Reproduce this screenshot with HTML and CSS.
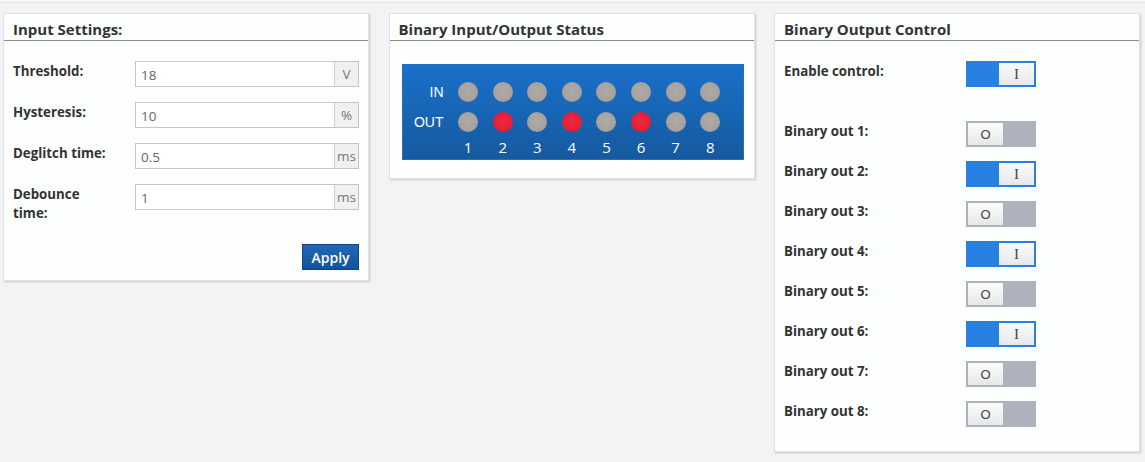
FILE: index.html
```html
<!DOCTYPE html>
<html>
<head>
<meta charset="utf-8">
<link rel="stylesheet" href="styles.css">
</head>
<body>
<div class="topline"></div>
<div class="panels">
  <section class="panel">
    <h2 class="panel-title">Input Settings:</h2>
    <div class="panel-body settings">
      <div class="field">
        <label class="field-label">Threshold:</label>
        <div class="input-group"><span class="input-value">18</span><span class="addon">V</span></div>
      </div>
      <div class="field">
        <label class="field-label">Hysteresis:</label>
        <div class="input-group"><span class="input-value">10</span><span class="addon">%</span></div>
      </div>
      <div class="field">
        <label class="field-label">Deglitch time:</label>
        <div class="input-group"><span class="input-value">0.5</span><span class="addon">ms</span></div>
      </div>
      <div class="field">
        <label class="field-label">Debounce time:</label>
        <div class="input-group"><span class="input-value">1</span><span class="addon">ms</span></div>
      </div>
      <div class="actions"><button class="btn-apply">Apply</button></div>
    </div>
  </section>

  <section class="panel">
    <h2 class="panel-title">Binary Input/Output Status</h2>
    <div class="panel-body status">
      <div class="led-box">
        <div class="led-row"><span class="led-label">IN</span>
          <span class="led"></span><span class="led"></span><span class="led"></span><span class="led"></span><span class="led"></span><span class="led"></span><span class="led"></span><span class="led"></span>
        </div>
        <div class="led-row"><span class="led-label">OUT</span>
          <span class="led"></span><span class="led on"></span><span class="led"></span><span class="led on"></span><span class="led"></span><span class="led on"></span><span class="led"></span><span class="led"></span>
        </div>
        <div class="led-row nums"><span class="led-label"></span>
          <span class="num">1</span><span class="num">2</span><span class="num">3</span><span class="num">4</span><span class="num">5</span><span class="num">6</span><span class="num">7</span><span class="num">8</span>
        </div>
      </div>
    </div>
  </section>

  <section class="panel">
    <h2 class="panel-title">Binary Output Control</h2>
    <div class="panel-body control">
      <div class="ctl-row enable"><span class="ctl-label">Enable control:</span><span class="toggle on"><span class="knob">I</span></span></div>
      <div class="ctl-row"><span class="ctl-label">Binary out 1:</span><span class="toggle"><span class="knob">O</span></span></div>
      <div class="ctl-row"><span class="ctl-label">Binary out 2:</span><span class="toggle on"><span class="knob">I</span></span></div>
      <div class="ctl-row"><span class="ctl-label">Binary out 3:</span><span class="toggle"><span class="knob">O</span></span></div>
      <div class="ctl-row"><span class="ctl-label">Binary out 4:</span><span class="toggle on"><span class="knob">I</span></span></div>
      <div class="ctl-row"><span class="ctl-label">Binary out 5:</span><span class="toggle"><span class="knob">O</span></span></div>
      <div class="ctl-row"><span class="ctl-label">Binary out 6:</span><span class="toggle on"><span class="knob">I</span></span></div>
      <div class="ctl-row"><span class="ctl-label">Binary out 7:</span><span class="toggle"><span class="knob">O</span></span></div>
      <div class="ctl-row"><span class="ctl-label">Binary out 8:</span><span class="toggle"><span class="knob">O</span></span></div>
    </div>
  </section>
</div>
</body>
</html>
```

FILE: styles.css
```css
* { box-sizing: border-box; }
html, body { margin: 0; padding: 0; }
body {
  background: #f2f3f5;
  font-family: "Open Sans", "Noto Sans", sans-serif;
  color: #333;
  width: 1145px;
  height: 462px;
  overflow: hidden;
}
.topline {
  height: 3px;
  background: #f5f6f7;
  border-bottom: 1px solid #e6e7e9;
}
.panels {
  display: flex;
  align-items: flex-start;
  gap: 19.5px;
  padding: 10px 0 0 3px;
}
.panel {
  width: 366px;
  background: #fdfefe;
  border: 1px solid #e2e3e5;
  box-shadow: 1px 1px 2px rgba(0,0,0,0.18);
}
.panel-title {
  margin: 0;
  padding: 5px 9px 0;
  line-height: 21px;
  font-size: 15px;
  font-weight: 700;
  color: #333;
  border-bottom: 1px solid #8a8a8a;
}
.panel-body { padding: 20px 9px 10px; }

/* settings */
.field {
  display: flex;
  align-items: flex-start;
  margin-bottom: 15px;
}
.field-label {
  width: 122px;
  padding-right: 22px;
  font-size: 13.3px;
  font-weight: 700;
  line-height: 19px;
  padding-top: 1px;
  color: #333;
}
.input-group {
  flex: 1;
  display: flex;
  height: 26px;
  border: 1px solid #c6c6c6;
  background: #fff;
}
.input-value {
  flex: 1;
  padding-left: 5px;
  font-size: 13.5px;
  line-height: 26px;
  color: #666;
}
.addon {
  width: 24px;
  border-left: 1px solid #d0d0d0;
  background: #f0f0f0;
  color: #777;
  font-size: 13.5px;
  line-height: 24px;
  text-align: center;
}
.actions {
  display: flex;
  justify-content: flex-end;
  padding-top: 6px;
}
.btn-apply {
  width: 57px;
  height: 26px;
  border: 1px solid #0f4784;
  background: linear-gradient(#1f68b6, #13529a);
  color: #fff;
  font-family: "Open Sans", sans-serif;
  font-size: 14px;
  font-weight: 600;
  padding: 0;
}

/* status */
.panel-body.status { padding: 23px 10px 18px 12px; }
.led-box {
  height: 96px;
  padding-top: 17px;
  background: linear-gradient(#1a70ca, #155a9f);
  border: 1px solid #2c6fb8;
}
.led-row {
  display: flex;
  align-items: center;
  gap: 14.6px;
  height: 20px;
  margin-bottom: 10px;
}
.led-label {
  width: 41px;
  text-align: right;
  color: #fff;
  font-family: "Liberation Sans", sans-serif;
  font-size: 14px;
}
.led {
  width: 20px;
  height: 20px;
  border-radius: 50%;
  background: radial-gradient(circle at 50% 45%, #b0aba6 0%, #a7a29e 60%, #9d9894 100%);
}
.led.on {
  background: radial-gradient(circle at 50% 45%, #ea2a40 0%, #e61f36 60%, #d81a30 100%);
}
.led-row.nums { margin-top: -4px; height: 18px; }
.num {
  width: 20px;
  text-align: center;
  color: #fff;
  font-size: 15px;
  line-height: 18px;
}

/* control */
.panel-body.control { padding: 20px 9px 24px; }
.ctl-row {
  display: flex;
  align-items: flex-start;
  margin-bottom: 14px;
}
.ctl-row:last-child { margin-bottom: 0; }
.ctl-row.enable { margin-bottom: 34px; }
.ctl-label {
  width: 182px;
  font-size: 13.3px;
  font-weight: 700;
  line-height: 19px;
  padding-top: 1px;
  color: #333;
}
.toggle {
  display: flex;
  width: 70px;
  height: 26px;
  padding: 2px;
  background: #adb2bc;
}
.toggle.on {
  background: #2880e0;
  justify-content: flex-end;
}
.knob {
  width: 35px;
  height: 22px;
  background: linear-gradient(#fbfbfb, #e7e8ea);
  color: #444;
  font-family: "Liberation Serif", serif;
  font-size: 15px;
  line-height: 23px;
  text-align: center;
}
.toggle:not(.on) .knob { font-family: "Liberation Sans", sans-serif; font-size: 13px; font-weight: 300; }
```
